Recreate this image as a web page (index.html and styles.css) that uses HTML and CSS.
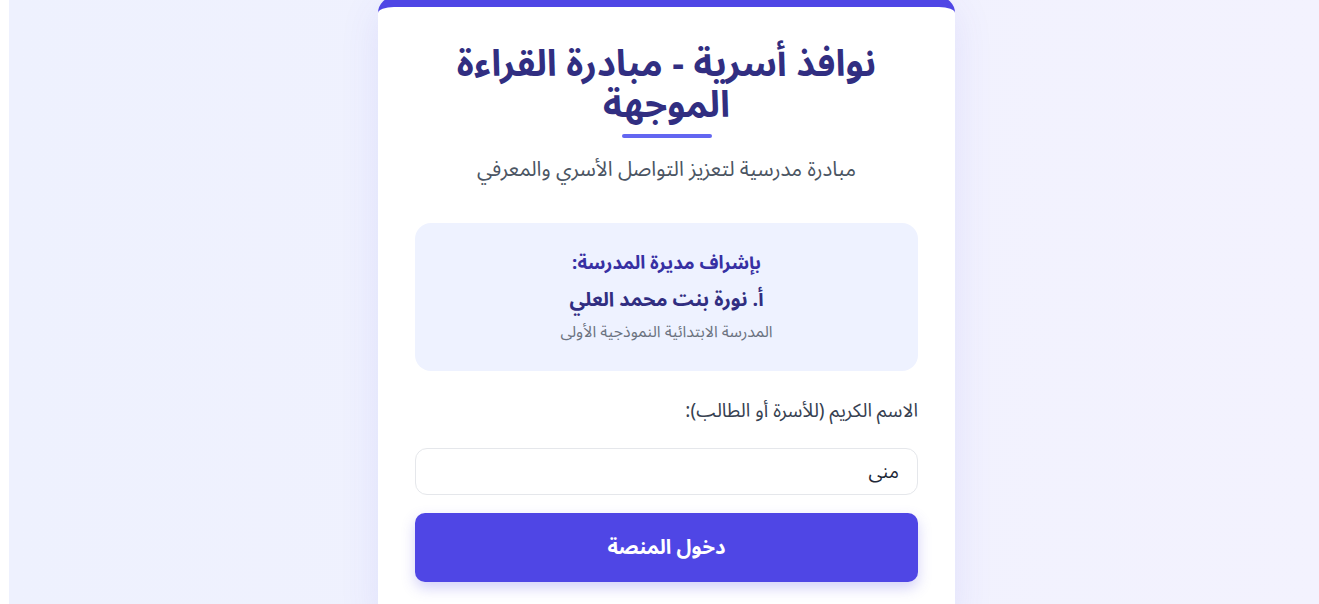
FILE: index.html
```html
<!DOCTYPE html>
<html lang="ar">
<head>
<meta charset="utf-8">
<title>نوافذ أسرية - مبادرة القراءة الموجهة</title>
<link rel="stylesheet" href="styles.css">
</head>
<body>
<div class="page">
  <main class="card" dir="rtl">
    <h1 class="title">نوافذ أسرية - مبادرة القراءة<br>الموجهة</h1>
    <div class="title-bar"></div>
    <p class="subtitle">مبادرة مدرسية لتعزيز التواصل الأسري والمعرفي</p>
    <section class="info">
      <div class="info-head">بإشراف مديرة المدرسة:</div>
      <div class="info-name">أ. نورة بنت محمد العلي</div>
      <div class="info-school">المدرسة الابتدائية النموذجية الأولى</div>
    </section>
    <form class="login">
      <label class="label" for="name">الاسم الكريم (للأسرة أو الطالب):</label>
      <input class="input" id="name" type="text" value="منى">
      <button class="btn" type="button">دخول المنصة</button>
    </form>
  </main>
</div>
</body>
</html>
```

FILE: styles.css
```css
html, body {
  margin: 0;
  padding: 0;
  background: #ffffff;
  overflow: hidden;
}
body {
  font-family: "Noto Sans Arabic", "Noto Kufi Arabic", "DejaVu Sans", sans-serif;
}
.page {
  margin-left: 9px;
  width: 1315px;
  height: 604px;
  background: linear-gradient(90deg, #eef1fe 0%, #f3f2fe 100%);
  display: flex;
  justify-content: center;
  align-items: flex-start;
  overflow: hidden;
}
.card {
  box-sizing: border-box;
  width: 577px;
  margin-top: -3px;
  background: #ffffff;
  border-top: 10px solid #4f46e5;
  border-radius: 16px;
  padding: 37px 37px 40px;
  box-shadow: 0 10px 40px rgba(79, 70, 229, 0.10);
  text-align: center;
}
.title {
  margin: 0;
  font-size: 36.5px;
  line-height: 41px;
  font-weight: 700;
  color: #312e81;
}
.title-bar {
  width: 90px;
  height: 4px;
  border-radius: 2px;
  background: #6366f1;
  margin: 8px auto 0;
}
.subtitle {
  margin: 17px 0 0;
  font-size: 20.5px;
  line-height: 29px;
  color: #4b5563;
}
.info {
  margin-top: 39px;
  background: #eef2ff;
  border-radius: 16px;
  padding: 26px 20px 27px;
  display: flex;
  flex-direction: column;
}
.info-head {
  font-size: 18.6px;
  line-height: 28px;
  font-weight: 700;
  color: #3730a3;
}
.info-name {
  margin-top: 8px;
  font-size: 19.8px;
  line-height: 30px;
  font-weight: 700;
  color: #312e81;
}
.info-school {
  margin-top: 6px;
  font-size: 15.8px;
  line-height: 23px;
  color: #6b7280;
}
.login {
  margin-top: 27px;
  display: flex;
  flex-direction: column;
  text-align: right;
}
.label {
  font-size: 19px;
  line-height: 27px;
  color: #374151;
}
.input {
  box-sizing: border-box;
  margin-top: 23px;
  height: 47px;
  border: 1.5px solid #e5e7eb;
  border-radius: 12px;
  padding: 0 18px;
  font-family: inherit;
  font-size: 19px;
  color: #1f2937;
  background: #ffffff;
  text-align: right;
  direction: rtl;
  outline: none;
}
.btn {
  margin-top: 18px;
  height: 69px;
  border: none;
  border-radius: 10px;
  background: #4f46e5;
  color: #ffffff;
  font-family: inherit;
  font-size: 20.3px;
  font-weight: 700;
  box-shadow: 0 6px 14px rgba(79, 70, 229, 0.25);
  cursor: pointer;
}
```
